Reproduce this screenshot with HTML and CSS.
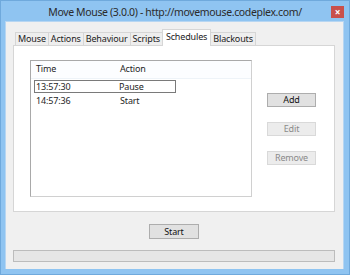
FILE: index.html
```html
<!DOCTYPE html>
<html lang="en">
<head>
    <meta charset="UTF-8">
    <title>Move Mouse</title>
    <link rel="stylesheet" href="styles.css">
</head>
<body>
    <div class="window">
        <div class="titlebar">
            <div class="title">Move Mouse (3.0.0) - http://movemouse.codeplex.com/</div>
            <div class="close">&#215;</div>
        </div>
        <div class="client">
            <div class="tabs">
                <div class="tab">Mouse</div>
                <div class="tab">Actions</div>
                <div class="tab">Behaviour</div>
                <div class="tab">Scripts</div>
                <div class="tab active">Schedules</div>
                <div class="tab">Blackouts</div>
            </div>
            <div class="panel">
                <div class="list">
                    <div class="row head">
                        <span class="col-time">Time</span>
                        <span class="col-action">Action</span>
                    </div>
                    <div class="row selected">
                        <span class="col-time">13:57:30</span>
                        <span class="col-action">Pause</span>
                    </div>
                    <div class="row">
                        <span class="col-time">14:57:36</span>
                        <span class="col-action">Start</span>
                    </div>
                </div>
                <div class="side">
                    <button class="btn">Add</button>
                    <button class="btn" disabled>Edit</button>
                    <button class="btn" disabled>Remove</button>
                </div>
            </div>
            <div class="footer">
                <button class="btn start">Start</button>
            </div>
            <div class="progress"></div>
        </div>
    </div>
</body>
</html>
```

FILE: styles.css
```css
body {
    margin: 0;
    font-family: "Noto Sans", "Open Sans", sans-serif;
    font-size: 9px;
    letter-spacing: -0.15px;
    color: #1e1e1e;
}
.window {
    width: 350px;
    height: 275px;
    box-sizing: border-box;
    background-color: #8fc4f1;
    border: 1px solid #6fa9dc;
    padding: 0 5px 5px 4px;
    display: flex;
    flex-direction: column;
}
.titlebar {
    height: 20px;
    display: flex;
    align-items: center;
}
.title {
    flex: 1;
    text-align: center;
    white-space: nowrap;
    font-size: 10.5px;
    letter-spacing: -0.35px;
    color: #2b2b2b;
    padding-left: 14px;
    margin-top: 1px;
}
.close {
    width: 13px;
    height: 12px;
    margin-top: 2px;
    background-color: #c9504b;
    color: #fff;
    font-size: 10px;
    line-height: 12px;
    text-align: center;
    font-weight: bold;
}
.client {
    flex: 1;
    background-color: #f0f0f0;
    border: 1px solid #b7d6f2;
    border-bottom: none;
    padding: 7px 8px 0 7px;
    display: flex;
    flex-direction: column;
}
.tabs {
    display: flex;
    height: 16px;
    padding-left: 2px;
    position: relative;
    z-index: 1;
}
.tab {
    margin-top: 3px;
    height: 13px;
    box-sizing: border-box;
    padding: 0 2px;
    border: 1px solid #d6d6d6;
    border-bottom: none;
    border-right: none;
    background-color: #eeeeee;
    line-height: 12px;
    color: #222;
    white-space: nowrap;
}
.tab:last-child {
    border-right: 1px solid #d6d6d6;
}
.tab.active {
    margin-top: 0;
    height: 17px;
    line-height: 13px;
    background-color: #fff;
    border-right: 1px solid #d6d6d6;
    padding: 0 3px;
}
.tab.active + .tab {
    border-left: none;
}
.panel {
    height: 167px;
    box-sizing: border-box;
    background-color: #fff;
    border: 1px solid #d6d6d6;
    padding: 14px 0 0 16px;
    display: flex;
}
.list {
    width: 222px;
    height: 137px;
    box-sizing: border-box;
    border: 1px solid #a9a9a9;
    border-right-color: #d0d0d0;
    border-bottom-color: #d0d0d0;
}
.row {
    display: flex;
    height: 13px;
    line-height: 13px;
    padding-left: 5px;
}
.row.head {
    height: 17px;
    line-height: 16px;
    background-color: #fcfdff;
    border-bottom: 1px solid #eef3f8;
    margin-bottom: 1px;
}
.row.selected {
    margin-left: 3px;
    padding-left: 1px;
    width: 142px;
    line-height: 11px;
    box-sizing: border-box;
    border: 1px solid #7a7a7a;
    margin-bottom: 1px;
}
.col-time {
    width: 84px;
}
.row.selected .col-time {
    width: 83px;
}
.side {
    display: flex;
    flex-direction: column;
    gap: 15px;
    padding: 33px 0 0 15px;
}
.btn {
    width: 49px;
    height: 14px;
    padding: 0;
    font-family: inherit;
    font-size: 9px;
    letter-spacing: -0.15px;
    line-height: 12px;
    color: #111;
    background-color: #e1e1e1;
    border: 1px solid #adadad;
}
.btn:disabled {
    color: #8a8a8a;
    background-color: #ececec;
    border-color: #d9d9d9;
}
.footer {
    display: flex;
    justify-content: center;
    padding: 12px 0 0 0;
}
.btn.start {
    width: 50px;
    height: 15px;
}
.progress {
    margin: 11px 0 0 0;
    height: 12px;
    background-color: #e6e6e6;
    border: 1px solid #bcbcbc;
    box-sizing: border-box;
}
```
